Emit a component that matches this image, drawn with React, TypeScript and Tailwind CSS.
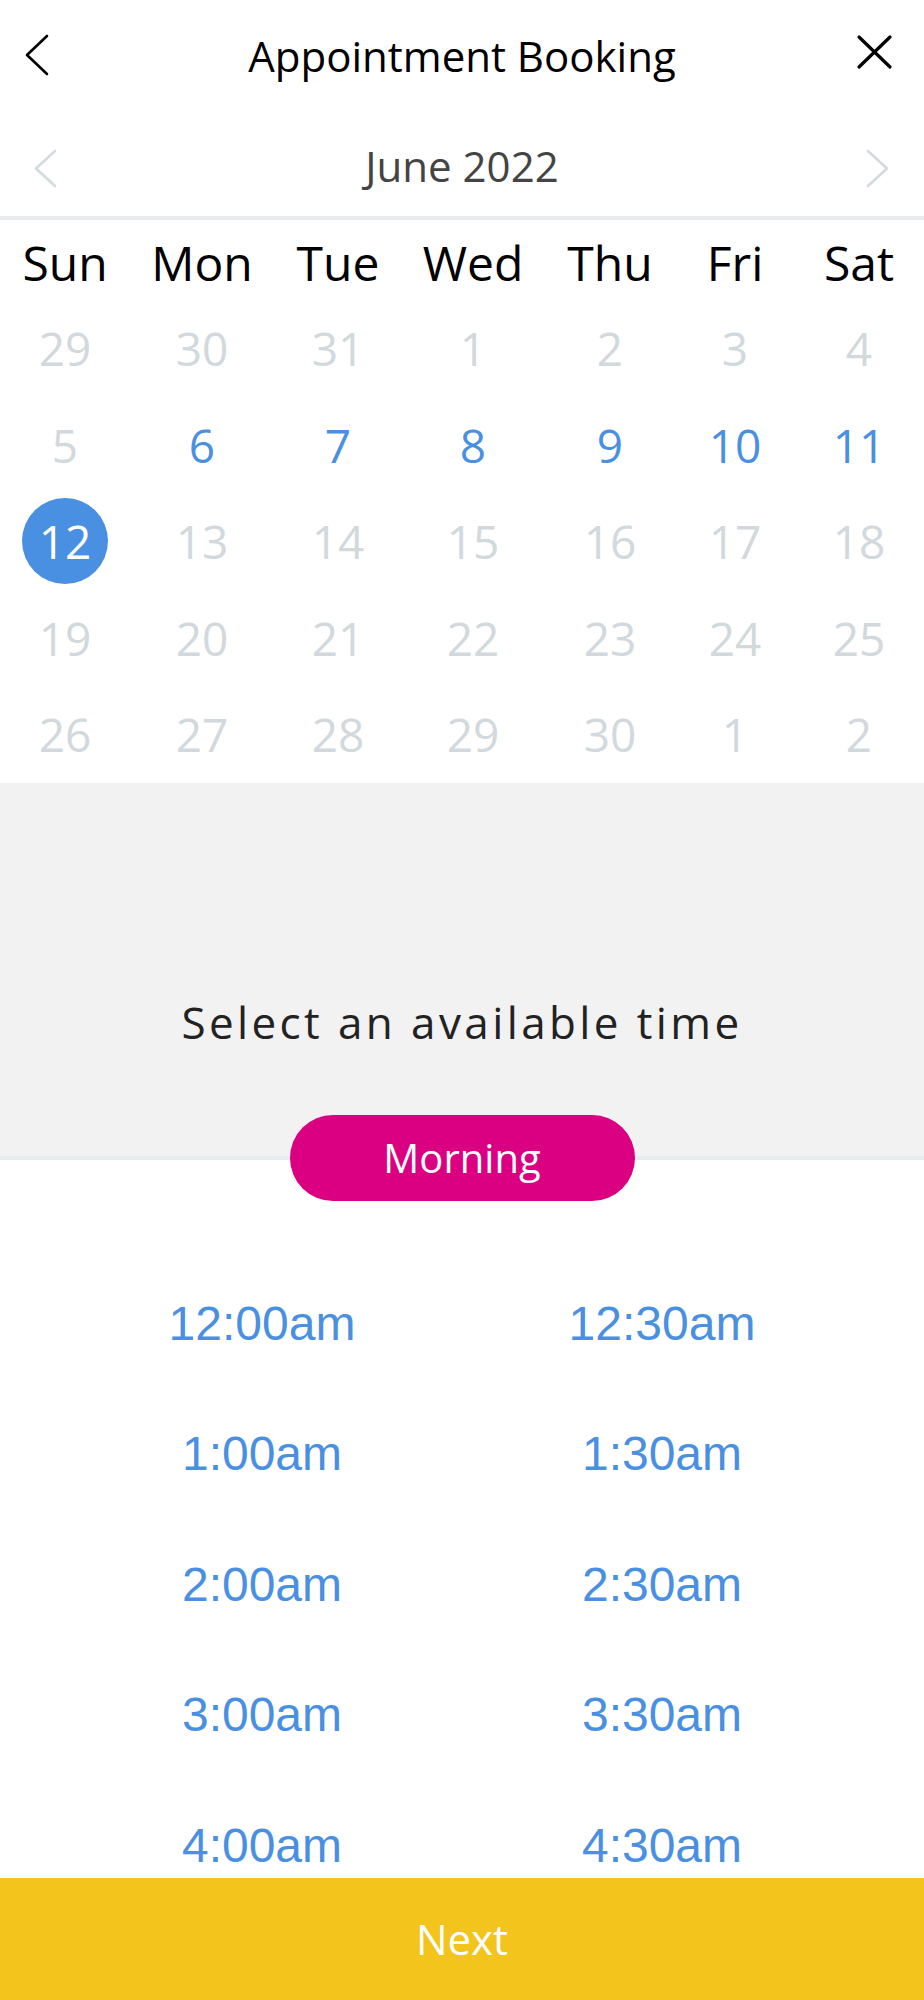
import React from 'react';

type Day = { n: number; tone: 'off' | 'open' | 'picked' };

const WEEKDAYS = ['Sun', 'Mon', 'Tue', 'Wed', 'Thu', 'Fri', 'Sat'];

const off = (n: number): Day => ({ n, tone: 'off' });
const open = (n: number): Day => ({ n, tone: 'open' });

// June 2022, padded with the tail of May and head of July
const WEEKS: Day[][] = [
    [off(29), off(30), off(31), off(1), off(2), off(3), off(4)],
    [off(5), open(6), open(7), open(8), open(9), open(10), open(11)],
    [{ n: 12, tone: 'picked' }, off(13), off(14), off(15), off(16), off(17), off(18)],
    [off(19), off(20), off(21), off(22), off(23), off(24), off(25)],
    [off(26), off(27), off(28), off(29), off(30), off(1), off(2)],
];

const SLOTS = [
    '12:00am', '12:30am',
    '1:00am', '1:30am',
    '2:00am', '2:30am',
    '3:00am', '3:30am',
    '4:00am', '4:30am',
];

function DayCell({ day }: { day: Day }) {
    if (day.tone === 'picked') {
        return (
            <div className="flex items-center justify-center h-[96.5px]">
                <span className="flex items-center justify-center w-[86px] h-[86px] rounded-full bg-[#4a90e2] text-white text-[46px] leading-none">
                    {day.n}
                </span>
            </div>
        );
    }
    return (
        <div
            className={
                'flex items-center justify-center h-[96.5px] text-[46px] leading-none ' +
                (day.tone === 'open' ? 'text-[#4a90e2]' : 'text-[#d1d9dc]')
            }
        >
            {day.n}
        </div>
    );
}

export default function App() {
    return (
        <div className="w-[924px] h-[2000px] flex flex-col bg-white overflow-hidden font-['Open_Sans',sans-serif]">
            {/* top bar */}
            <div className="grid grid-cols-[80px_1fr_80px] items-center h-[112px] shrink-0">
                <svg viewBox="0 0 80 112" className="w-[80px] h-[112px]" fill="none" stroke="#000" strokeWidth="2.6" strokeLinecap="round" strokeLinejoin="round">
                    <path d="M47 36 L27 55 L47 74" />
                </svg>
                <h1 className="text-center text-[42px] leading-none text-black">Appointment Booking</h1>
                <svg viewBox="0 0 80 112" className="w-[80px] h-[112px]" fill="none" stroke="#000" strokeWidth="3.2" strokeLinecap="round">
                    <path d="M15 37 L46 67 M46 37 L15 67" />
                </svg>
            </div>

            {/* month switcher */}
            <div className="grid grid-cols-[80px_1fr_80px] items-center h-[108px] pt-[4px] border-b-4 border-[#e7ebed] shrink-0">
                <svg viewBox="0 0 80 100" className="w-[80px] h-[100px]" fill="none" stroke="#d3dbde" strokeWidth="2.6" strokeLinecap="round" strokeLinejoin="round">
                    <path d="M55 35 L36 52.5 L55 70" />
                </svg>
                <div className="text-center text-[42px] leading-none text-[#444]">June 2022</div>
                <svg viewBox="0 0 80 100" className="w-[80px] h-[100px]" fill="none" stroke="#d3dbde" strokeWidth="2.6" strokeLinecap="round" strokeLinejoin="round">
                    <path d="M24 35 L43 52.5 L24 70" />
                </svg>
            </div>

            {/* calendar */}
            <div className="grid grid-cols-[130px_144px_128px_142px_132px_118px_130px] shrink-0">
                {WEEKDAYS.map((d) => (
                    <div key={d} className="flex items-center justify-center h-[80px] pt-[6px] text-[48px] leading-none text-black">
                        {d}
                    </div>
                ))}
                {WEEKS.flat().map((day, i) => (
                    <DayCell key={i} day={day} />
                ))}
            </div>

            {/* time header */}
            <div className="flex items-center justify-center h-[377px] pt-[106px] bg-[#f2f2f2] border-b-4 border-[#e7ecef] shrink-0">
                <span className="text-[44px] leading-none tracking-[3.4px] text-[#222]">Select an available time</span>
            </div>
            <div className="flex justify-center -mt-[45px] shrink-0">
                <button className="w-[345px] h-[86px] rounded-full bg-[#db0082] text-white text-[40px] leading-none">
                    Morning
                </button>
            </div>

            {/* slots */}
            <div className="flex-1 overflow-hidden pt-[58px] px-[62px]">
                <div className="grid grid-cols-2">
                    {SLOTS.map((s) => (
                        <div
                            key={s}
                            className="flex items-center justify-center h-[130.5px] text-[48px] leading-none text-[#4a90e2] font-['Liberation_Sans',Arial,sans-serif]"
                        >
                            {s}
                        </div>
                    ))}
                </div>
            </div>

            <button className="h-[122px] shrink-0 bg-[#f2c41c] text-white text-[42px] leading-none">
                Next
            </button>
        </div>
    );
}
